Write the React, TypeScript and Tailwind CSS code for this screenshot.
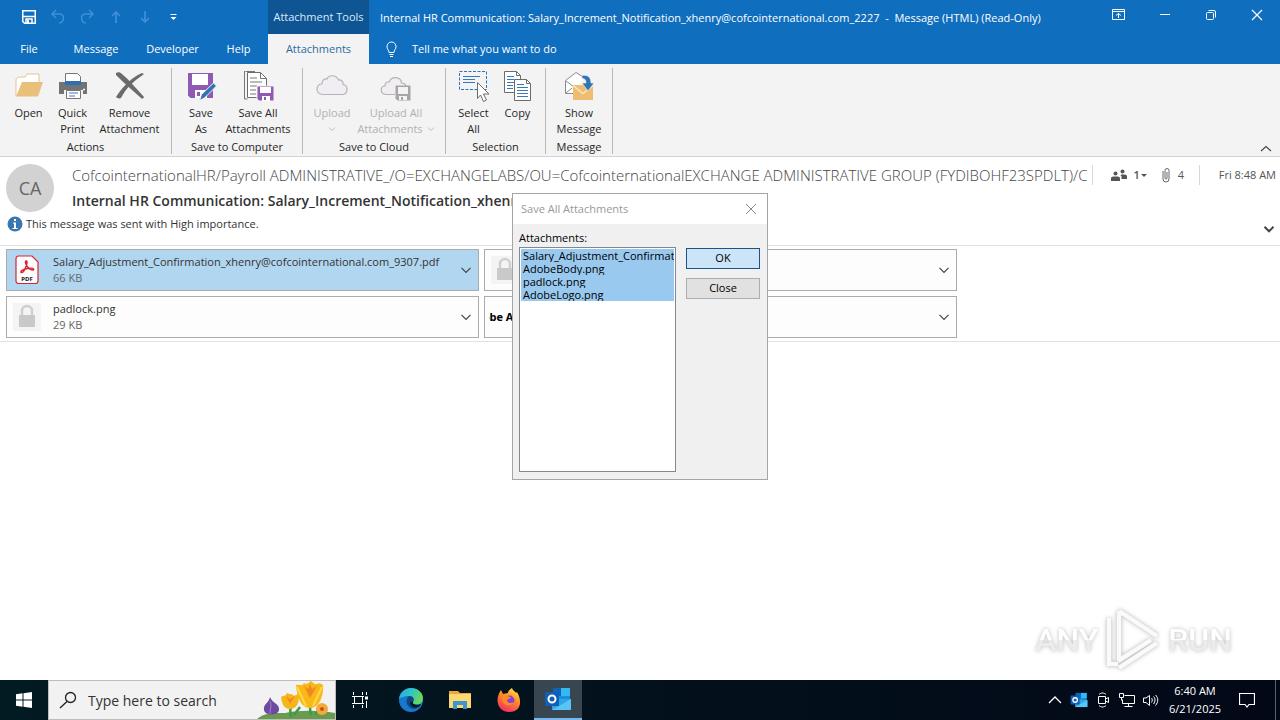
import React from "react";

type IconProps = { children: React.ReactNode; size?: string; box?: string };

function Svg({ children, size = "size-8", box = "0 0 32 32" }: IconProps) {
  return (
    <svg className={`${size} shrink-0`} viewBox={box} fill="none" aria-hidden="true">
      {children}
    </svg>
  );
}

function Chevron({ size = "size-3", width = 1.2 }: { size?: string; width?: number }) {
  return (
    <Svg size={size} box="0 0 12 12">
      <path d="M1.500 3.800 6 8.300l4.500-4.500" stroke="currentColor" strokeWidth={width} />
    </Svg>
  );
}

const OpenIcon = () => (
  <Svg>
    <path d="M3 26V9l2-2h7l2-3h12v8" fill="#fff" stroke="#e6c48f" strokeWidth="1" />
    <path d="M3 26.500 9 12h21l-5 14.500z" fill="#e9bf7c" />
  </Svg>
);

const PrintIcon = () => (
  <Svg>
    <path d="M8.500 11V3.500h12l3 3V11" fill="#fff" stroke="#767676" />
    <path d="M2 12h28v12h-4v-4H7v4H2z" fill="#737373" />
    <path d="M8 11h16v4H8z" fill="#2f6fb0" />
    <circle cx="27" cy="19.500" r="1" fill="#fff" />
    <path d="M9.500 20.500h14v8h-14z" fill="#fff" stroke="#767676" />
    <path d="M12 23h9M12 26h6" stroke="#3a78b8" />
  </Svg>
);

const RemoveIcon = () => (
  <Svg>
    <path d="M2 3c2-1 4-1 6 1 7 6 14 14 22 23-1 2-2 2-3 1C18 20 9 12 2 5z" fill="#6b6b6b" />
    <path d="M30 4C20 11 12 18 7 28c-2 1-4 0-5-1C9 16 18 7 28 3z" fill="#6b6b6b" />
  </Svg>
);

const SaveAsIcon = () => (
  <Svg>
    <path d="M3 3h25v25H5.500L3 25.500z" fill="#9059b3" />
    <path d="M7 4h16v11H7zM10 20h12v8H10z" fill="#fff" />
    <path d="M12 22h3v4h-3z" fill="#9059b3" />
    <path d="m14.500 30.500 2-6L28.500 13l3 3-12 12z" fill="#2f75b5" stroke="#f3f3f3" />
  </Svg>
);

const SaveAllIcon = () => (
  <Svg>
    <path d="M3.500 1.500H13M2.500 1v28h3" stroke="#777" />
    <path d="M5.500 2.500h13l6 6v19h-19z" fill="#fff" stroke="#6c6c6c" />
    <path d="M18.500 2.500v6h6M8 8h7M8 12h12M8 16h7M8 20h6M8 24h6" stroke="#777" />
    <path d="M15 16h17v15H17l-2-2z" fill="#9059b3" stroke="#f3f3f3" />
    <path d="M18 17h11v6H18zM20 26h8v5h-8z" fill="#fff" />
    <path d="M22 27h2v3h-2z" fill="#9059b3" />
  </Svg>
);

const CLOUD =
  "M7 24.500C3 24.500.8 22 1 19c.1-3 2-5 5-5-.3-3 1.800-5.500 5-5 1.500-4 9-5 11.500 1 3-.5 5 1.800 4.600 4.500 2.500.3 4 2.500 3.900 5-.1 3-2 5-5 5z";

const CloudIcon = () => (
  <Svg>
    <path d={CLOUD} fill="#f0eef2" stroke="#b5b2b8" strokeWidth="1.200" />
  </Svg>
);

const CloudAllIcon = () => (
  <Svg>
    <path
      d="M15 24.500H6c-3 0-5-2-4.800-4.500C1.300 17.500 3 16 5 16c0-3 1.800-4.500 4.500-4.200C11 6 21 6 21.500 13c2.500 0 4 1 4.500 3"
      fill="#f0eef2"
      stroke="#b5b2b8"
      strokeWidth="1.200"
    />
    <path d="M15.500 15.500h15v15h-13l-2-2z" fill="#a6a6a6" />
    <path d="M18 17h10v7H18zM19 26h8v4h-8z" fill="#f3f3f3" />
    <path d="M21 27h2v3h-2z" fill="#a6a6a6" />
  </Svg>
);

const SelectIcon = () => (
  <Svg>
    <path d="M1.500 1.500h27v18h-27z" stroke="#2f75b5" strokeDasharray="3 1.500" />
    <path d="M5 6.500h17M5 9.500h12M5 12.500h12" stroke="#3a78b8" />
    <path d="m19.500 12.500 11.500 11.500h-5.500l3 6-3 1.500-3-6.500-3 3.500z" fill="#fff" stroke="#6c6c6c" />
  </Svg>
);

const CopyIcon = () => (
  <Svg>
    <path d="M2.500 1.500h12l4 4v17h-16z" fill="#fff" stroke="#6c6c6c" />
    <path d="M14.500 1.500v4h4" stroke="#6c6c6c" />
    <path d="M5 6.500h7M5 9.500h7M5 12.500h7M5 15.500h6M5 18.500h6" stroke="#3a78b8" />
    <path d="M12.500 9.500h12l4 4v17h-16z" fill="#fff" stroke="#6c6c6c" />
    <path d="M24.500 9.500v4h4" stroke="#6c6c6c" />
    <path d="M15 14.500h7M15 17.500h11M15 20.500h11M15 23.500h11M15 26.500h11" stroke="#3a78b8" />
  </Svg>
);

const ShowIcon = () => (
  <Svg>
    <path d="M10 23.500H2.500v-13L13 2.500l8 5" fill="#fff" stroke="#8b8b8b" />
    <path d="m3 11 8 6M3 23l6-5" stroke="#8b8b8b" />
    <path d="M10 15h20v15H10z" fill="#efbd6f" />
    <path d="m10 15.500 10 8 10-8" stroke="#fbe6c5" strokeWidth="1.500" />
    <path d="M19 5.500c6-1 9 2 9 7.500h3l-6 8-6-8h4c0-3-1-4.500-4-4.500z" fill="#2f75b5" stroke="#f3f3f3" strokeWidth="0.600" />
  </Svg>
);

type Command = {
  icon: React.ReactNode;
  lines: string[];
  width: string;
  disabled?: boolean;
  menu?: "below" | "inline";
};

type Group = { label: string; frame: string; commands: Command[] };

const groups: Group[] = [
  {
    label: "Actions",
    frame: "w-[172px]",
    commands: [
      { icon: <OpenIcon />, lines: ["Open"], width: "w-11" },
      { icon: <PrintIcon />, lines: ["Quick", "Print"], width: "w-11" },
      { icon: <RemoveIcon />, lines: ["Remove", "Attachment"], width: "w-[70px]" },
    ],
  },
  {
    label: "Save to Computer",
    frame: "w-[131px]",
    commands: [
      { icon: <SaveAsIcon />, lines: ["Save", "As"], width: "w-[42px]" },
      { icon: <SaveAllIcon />, lines: ["Save All", "Attachments"], width: "w-[72px]" },
    ],
  },
  {
    label: "Save to Cloud",
    frame: "w-[143px]",
    commands: [
      { icon: <CloudIcon />, lines: ["Upload"], width: "w-11", disabled: true, menu: "below" },
      { icon: <CloudAllIcon />, lines: ["Upload All", "Attachments"], width: "w-[84px]", disabled: true, menu: "inline" },
    ],
  },
  {
    label: "Selection",
    frame: "w-[100px]",
    commands: [
      { icon: <SelectIcon />, lines: ["Select", "All"], width: "w-11" },
      { icon: <CopyIcon />, lines: ["Copy"], width: "w-11" },
    ],
  },
  {
    label: "Message",
    frame: "w-[67px]",
    commands: [{ icon: <ShowIcon />, lines: ["Show", "Message"], width: "w-16" }],
  },
];

function RibbonButton({ icon, lines, width, disabled, menu }: Command) {
  return (
    <button
      type="button"
      disabled={disabled}
      className={`${width} flex shrink-0 flex-col items-center whitespace-nowrap text-[11px] leading-4 disabled:text-[#b1b1b1]`}
    >
      {icon}
      <span className="mt-[3px] block">{lines[0]}</span>
      {lines[1] && (
        <span className="flex items-center justify-center gap-1">
          {lines[1]}
          {menu === "inline" && <Chevron size="size-2" />}
        </span>
      )}
      {menu === "below" && (
        <span className="flex h-4 items-center">
          <Chevron size="size-2" />
        </span>
      )}
    </button>
  );
}

function Header() {
  return (
    <header className="bg-[#106ebe] text-white">
      <div className="flex h-[34px]">
        <div className="flex w-[268px] shrink-0 items-center gap-[13px] pl-[21px] text-[#3d8fd6]">
          <button type="button" aria-label="Save">
            <Svg size="size-4" box="0 0 16 16">
              <path d="M1.750 1.750h12.500v12.500H3.500l-1.750-1.750z" stroke="#fff" strokeWidth="1.500" />
              <path d="M2 7.500h12M5 14v-4h6v4" stroke="#fff" strokeWidth="1.500" />
              <path d="M6 11h2v3H6z" fill="#fff" />
            </Svg>
          </button>
          <button type="button" aria-label="Undo" disabled>
            <Svg size="size-4" box="0 0 16 16">
              <path d="M6 1 2 5l4 4M2 5h7c6 0 6 8 0 9" stroke="currentColor" strokeWidth="1.500" />
            </Svg>
          </button>
          <button type="button" aria-label="Redo" disabled>
            <Svg size="size-4" box="0 0 16 16">
              <path d="m10 1 4 4-4 4M14 5H7c-6 0-6 8 0 9" stroke="currentColor" strokeWidth="1.500" />
            </Svg>
          </button>
          <button type="button" aria-label="Previous item" disabled>
            <Svg size="size-4" box="0 0 16 16">
              <path d="M8 14V3M4 7l4-4 4 4" stroke="currentColor" strokeWidth="1.750" />
            </Svg>
          </button>
          <button type="button" aria-label="Next item" disabled>
            <Svg size="size-4" box="0 0 16 16">
              <path d="M8 2v11M4 9l4 4 4-4" stroke="currentColor" strokeWidth="1.750" />
            </Svg>
          </button>
          <button type="button" aria-label="Customize toolbar">
            <Svg size="size-4" box="0 0 16 16">
              <path d="M4.500 5.500h6" stroke="#fff" />
              <path d="M4.500 8h6l-3 3z" fill="#fff" />
            </Svg>
          </button>
        </div>
        <div className="flex w-[101px] shrink-0 items-center justify-center whitespace-nowrap bg-[#0f5493] text-[11px] text-[#d9ebfa]">
          Attachment Tools
        </div>
        <h1 className="min-w-0 flex-1 truncate pl-[11px] text-[11px] leading-[36px]">
          Internal HR Communication: Salary_Increment_Notification_xhenry@cofcointernational.com_2227&nbsp; -&nbsp; Message (HTML) (Read-Only)
        </h1>
        <div className="flex h-[30px] shrink-0">
          <button type="button" aria-label="Ribbon display options" className="grid w-[46px] place-items-center">
            <Svg size="size-4" box="0 0 16 16">
              <path d="M1.500 2.500h12v10h-12zM1.500 4.500h12M7.500 11V6.500M5 8.500l2.500-2 2.500 2" stroke="#fff" />
            </Svg>
          </button>
          <button type="button" aria-label="Minimize" className="grid w-[46px] place-items-center">
            <Svg size="size-4" box="0 0 16 16">
              <path d="M3 7.500h10" stroke="#fff" />
            </Svg>
          </button>
          <button type="button" aria-label="Restore" className="grid w-[46px] place-items-center">
            <Svg size="size-4" box="0 0 16 16">
              <rect x="3.500" y="5.500" width="7" height="7" rx="1" stroke="#fff" />
              <path d="M5.500 3.500h5.500a1.500 1.500 0 0 1 1.500 1.500v5.500" stroke="#fff" />
            </Svg>
          </button>
          <button type="button" aria-label="Close window" className="grid w-[46px] place-items-center">
            <Svg size="size-4" box="0 0 16 16">
              <path d="m3 3 10 10M13 3 3 13" stroke="#fff" strokeWidth="1.200" />
            </Svg>
          </button>
        </div>
      </div>
      <nav className="flex h-[30px] items-center text-[11px]">
        <div className="flex w-[268px] shrink-0">
          <button type="button" className="w-[58px]">File</button>
          <button type="button" className="w-[76px]">Message</button>
          <button type="button" className="w-[77px]">Developer</button>
          <button type="button" className="w-[55px]">Help</button>
        </div>
        <button type="button" className="h-full w-[101px] shrink-0 bg-[#f3f3f3] text-[#2b6aa5]">
          Attachments
        </button>
        <button type="button" className="flex items-center gap-3 pl-[15px]">
          <Svg size="size-4" box="0 0 16 16">
            <path d="M5 11.500C5 9 3 8.500 3 5.500a4.500 4.500 0 0 1 9 0c0 3-2 3.500-2 6zM5.500 13.500h4M6 15.500h3" stroke="#fff" />
          </Svg>
          Tell me what you want to do
        </button>
      </nav>
    </header>
  );
}

function Ribbon() {
  return (
    <section aria-label="Ribbon" className="flex h-[93px] border-b border-[#d2d2d2] bg-[#f3f3f3] pt-1 text-[#262626]">
      {groups.map((group) => (
        <div key={group.label} className={`${group.frame} flex h-[86px] shrink-0 flex-col border-r border-[#b8b8b8] pt-0.5`}>
          <div className="flex h-[70px] justify-center">
            {group.commands.map((command) => (
              <RibbonButton key={command.lines.join(" ")} {...command} />
            ))}
          </div>
          <div className="whitespace-nowrap text-center text-[11px] leading-[19px]">{group.label}</div>
        </div>
      ))}
      <button type="button" aria-label="Collapse ribbon" className="ml-auto mr-2 self-end pb-px text-[#444]">
        <Svg size="size-3" box="0 0 12 12">
          <path d="m1 8 5-4.500L11 8" stroke="currentColor" strokeWidth="1.100" />
        </Svg>
      </button>
    </section>
  );
}

const PdfThumb = () => (
  <Svg size="h-8 w-7" box="0 0 28 32">
    <path d="M5 2h14l6 6v19a2.500 2.500 0 0 1-2.500 2.500h-17A2.500 2.500 0 0 1 3 27V4.500A2.500 2.500 0 0 1 5 2z" fill="#fff" stroke="#dc2430" strokeWidth="1.200" />
    <path d="M13.500 7c-2.500 0 0 5 2 7 2.500 2.500 6 2.500 5 1-1-2-11 0-12.500 2.500-.5 1.500 2 1.500 3.500-1.500s3.500-9 2-9z" stroke="#dc2430" strokeWidth="1.500" />
    <text x="14" y="27" textAnchor="middle" fontSize="6" fontWeight="700" fill="#111">PDF</text>
  </Svg>
);

const LockThumb = () => (
  <Svg size="h-8 w-7" box="0 0 28 32">
    <path d="M0 2h28v28H0z" fill="#f4f4f4" />
    <path d="M9 15v-5a5 5 0 0 1 10 0v5" stroke="#cfcfcf" strokeWidth="2.500" />
    <rect x="6" y="14" width="16" height="12" rx="1" fill="#c9c9c9" />
  </Svg>
);

const LogoThumb = () => (
  <span className="flex w-7 justify-center overflow-hidden whitespace-nowrap text-[11px] font-bold text-black">
    Adobe Acrob
  </span>
);

type Attachment = { name: string; size?: string; thumb: React.ReactNode; selected?: boolean };

const attachments: Attachment[] = [
  { name: "Salary_Adjustment_Confirmation_xhenry@cofcointernational.com_9307.pdf", size: "66 KB", thumb: <PdfThumb />, selected: true },
  { name: "AdobeBody.png", thumb: <LockThumb /> },
  { name: "padlock.png", size: "29 KB", thumb: <LockThumb /> },
  { name: "AdobeLogo.png", thumb: <LogoThumb /> },
];

function AttachmentCard({ name, size, thumb, selected }: Attachment) {
  return (
    <li
      className={`flex h-[42px] items-center border border-[#ababab] pr-1.5 ${selected ? "bg-[#b1d6f0]" : "bg-[#fdfdfd]"} ${
        name === "AdobeLogo.png" ? "pl-1" : "pl-1.5"
      }`}
    >
      {thumb}
      <div className="ml-3 min-w-0 flex-1 text-[11px] leading-4">
        {size && (
          <>
            <div className="truncate text-[#333]">{name}</div>
            <div className="text-[#666]">{size}</div>
          </>
        )}
      </div>
      <button type="button" aria-label={`Options for ${name}`} className="text-[#444]">
        <Chevron />
      </button>
    </li>
  );
}

function MessageHeader() {
  return (
    <section aria-label="Message header" className="pt-1">
      <div className="flex items-start pl-1.5">
        <div className="mt-[3px] grid size-12 shrink-0 place-items-center rounded-full bg-[#d2d2d2] text-[18px] text-[#666]">
          CA
        </div>
        <div className="ml-[18px] min-w-0 flex-1">
          <div className="flex h-7 items-center">
            <div className="min-w-0 flex-1 overflow-hidden whitespace-nowrap text-[15px] font-light leading-6 text-[#444]">
              CofcointernationalHR/Payroll ADMINISTRATIVE_/O=EXCHANGELABS/OU=CofcointernationalEXCHANGE ADMINISTRATIVE GROUP (FYDIBOHF23SPDLT)/CN
            </div>
            <div className="ml-1 flex h-5 shrink-0 items-center border-l border-[#d8d8d8] pl-[18px] text-[11px] text-[#555]">
              <Svg size="size-4" box="0 0 16 16">
                <circle cx="4.500" cy="6.500" r="2" fill="#555" />
                <circle cx="11.500" cy="4.500" r="2" fill="#555" />
                <path d="M0 14v-2.500C0 9.500 2 9.500 4.500 9.500s4.500 0 4.500 2V14zM10.500 12H16V9.500c0-2-2-2-4.500-2-1 0-1.500.3-2 1 1.500.5 1 1.500 1 3.500z" fill="#555" />
              </Svg>
              <span className="ml-1.5 font-semibold">1</span>
              <Svg size="size-2" box="0 0 8 8">
                <path d="M1 3h6L4 6z" fill="#555" />
              </Svg>
              <Svg size="ml-3 h-4 w-3" box="0 0 12 16">
                <path d="M3 4v8a3 3 0 0 0 6 0V3.500a2 2 0 0 0-4 0V11a1 1 0 0 0 2 0V5" stroke="#666" />
              </Svg>
              <span className="ml-1.5">4</span>
            </div>
            <time className="ml-[15px] flex h-5 w-[81px] shrink-0 items-center justify-end whitespace-nowrap border-l border-[#d8d8d8] pr-1 text-[11px] text-[#555]">
              Fri 8:48 AM
            </time>
          </div>
          <h2 className="overflow-hidden whitespace-nowrap text-[14px] font-semibold leading-6 text-[#333]">
            Internal HR Communication: Salary_Increment_Notification_xhenry@cofcointernational.com_2227
          </h2>
        </div>
      </div>
      <div className="flex h-[33px] items-start border-b border-[#e1e1e1] pl-[7px] pr-[5px] text-[11px] text-[#333]">
        <div className="flex h-[22px] flex-1 items-center gap-[3px]">
          <Svg size="size-4" box="0 0 16 16">
            <circle cx="8" cy="8" r="7.500" fill="#3a76af" />
            <path d="M7 3h2v2H7zM6 6.500h3V12h1.500v1h-5v-1H7V7.500H6z" fill="#fff" />
          </Svg>
          <p>This message was sent with High importance.</p>
        </div>
        <button type="button" aria-label="Expand header" className="self-center text-[#444]">
          <Chevron width={2} />
        </button>
      </div>
      <ul className="grid grid-cols-2 gap-[5px] border-b border-[#e1e1e1] py-[3px] pl-1.5 pr-[323px]">
        {attachments.map((item) => (
          <AttachmentCard key={item.name} {...item} />
        ))}
      </ul>
    </section>
  );
}

const files = ["Salary_Adjustment_Confirmati", "AdobeBody.png", "padlock.png", "AdobeLogo.png"];

function SaveDialog() {
  return (
    <div
      role="dialog"
      aria-labelledby="dialog-title"
      className="absolute left-1/2 top-[193px] w-[256px] -translate-x-1/2 border border-[#a5a5a5] bg-[#f0f0f0] text-[11px] text-black"
    >
      <div className="flex h-[30px] items-center justify-between bg-white pl-2 pr-[10px]">
        <h2 id="dialog-title" className="text-[11px] text-[#999]">Save All Attachments</h2>
        <button type="button" aria-label="Close dialog">
          <Svg size="size-3" box="0 0 12 12">
            <path d="m1 1 10 10M11 1 1 11" stroke="#888" />
          </Svg>
        </button>
      </div>
      <div className="flex gap-2.5 pb-[7px] pl-1.5 pr-[7px] pt-1.5">
        <div className="w-[157px]">
          <div id="files-label" className="leading-4">Attachments:</div>
          <ul
            role="listbox"
            aria-multiselectable="true"
            aria-labelledby="files-label"
            className="mt-px h-[225px] border border-[#828790] bg-white p-px leading-[13px]"
          >
            {files.map((file) => (
              <li key={file} role="option" aria-selected="true" className="overflow-hidden whitespace-nowrap bg-[#99c9ef] pl-0.5">
                {file}
              </li>
            ))}
          </ul>
        </div>
        <div className="flex flex-1 flex-col gap-[9px] pt-[18px]">
          <button type="button" className="h-[21px] border border-[#1c5285] bg-[#cce4f7]">OK</button>
          <button type="button" className="h-[21px] border border-[#adadad] bg-[#e1e1e1]">Close</button>
        </div>
      </div>
    </div>
  );
}

function Watermark() {
  return (
    <div className="flex items-center gap-1.5 text-[32px] font-medium leading-none drop-shadow-[0_0_2px_#bbb] [font-family:Roboto,sans-serif]">
      <span className="bg-linear-to-b from-white from-50% to-[#ececec] to-50% bg-clip-text text-transparent">ANY</span>
      <Svg size="h-16 w-[58px]" box="0 0 58 64">
        <path d="M15 3v50M15 3l38 25M5 10v46h9M15 60l38-25M14 53l33-21" stroke="#e2e2e2" strokeWidth="5" />
        <path d="M15 3v50M15 3l38 25M5 10v46h9M15 60l38-25M14 53l33-21" stroke="#fafafa" strokeWidth="4" />
      </Svg>
      <span className="bg-linear-to-b from-white from-50% to-[#ececec] to-50% bg-clip-text text-transparent">RUN</span>
    </div>
  );
}

const OutlookIcon = ({ size }: { size: string }) => (
  <Svg size={size} box="0 0 28 28">
    <path d="M9 3h17v17H9z" fill="#1490df" />
    <path d="M17 3h9v8h-9z" fill="#35b8f1" />
    <path d="M9 3h8v8H9z" fill="#0c64b8" />
    <path d="M8 14h19v11H8z" fill="#2fa4e7" />
    <path d="m27 14-19 11h19z" fill="#58c5f5" />
    <path d="M1 7h14v14H1z" fill="#0f5fb5" />
    <circle cx="8" cy="14" r="3.500" stroke="#fff" strokeWidth="2" />
  </Svg>
);

function Taskbar() {
  return (
    <footer className="flex h-10 items-stretch bg-linear-to-r from-[#021a22] to-[#030817] text-white">
      <button type="button" aria-label="Start" className="grid w-12 shrink-0 place-items-center">
        <Svg size="size-4" box="0 0 16 16">
          <path d="m0 2.200 6.500-.9v6.200H0zM7.500 1.200 16 0v7.500H7.500zM0 8.500h6.500v6.200L0 13.800zM7.500 8.500H16V16l-8.500-1.200z" fill="#fff" />
        </Svg>
      </button>
      <label className="flex w-72 shrink-0 items-center border border-[#bdbdbd] bg-[#f2f2f2] pl-2.5">
        <Svg size="size-[18px]" box="0 0 18 18">
          <circle cx="11.500" cy="6.500" r="5" stroke="#222" strokeWidth="1.300" />
          <path d="M8 10.500 1 17" stroke="#222" strokeWidth="1.300" />
        </Svg>
        <input
          aria-label="Search"
          placeholder="Type here to search"
          className="ml-[11px] w-0 min-w-0 flex-1 bg-transparent text-[14px] outline-none placeholder:text-[#333]"
        />
        <Svg size="h-[38px] w-20" box="0 0 80 38">
          <path d="M2 38c8-7 18-6 28-6 14-3 34-3 50 0v6z" fill="#6a9a4f" />
          <path d="M36 36c-1-5-1-8 0-12M56 34c-2-8-1-12 1-16M39 34l6-8M60 33l7-7" stroke="#3f9a45" strokeWidth="2.500" />
          <path d="M15 16c-1 6-7 7-6 13 1 6 14 6 15 0s-7-7-9-13z" fill="#6d4aa0" />
          <path d="M15 20c2 5 0 8 0 13" stroke="#a383ce" />
          <path d="M26 16c3-2 4 0 6-4 3 2 5 0 7 3 2-1 4-2 5 0 0 8-3 13-9 13s-8-5-9-12z" fill="#f7b51c" />
          <path d="m31 15 4 8 5-8-5 3z" fill="#f08a1e" />
          <path d="M41 4c4-1 6 2 8-2 3 2 4 0 7-2 3 2 4 4 6 3 2-2 5 0 6 1 1 11-4 23-13 23S42 16 41 4z" fill="#f9b718" />
          <path d="m42 6 9 19M67 6l-9 19" stroke="#ffd94a" strokeWidth="2" />
          <path d="m49 5 6 12 7-12-5 3-2-5-2 5z" fill="#f08a1e" />
          <circle cx="67" cy="28" r="6" fill="#f6a93b" />
          <circle cx="67" cy="28" r="2" fill="#bd5615" />
        </Svg>
      </label>
      <button type="button" aria-label="Task view" className="grid w-12 shrink-0 place-items-center">
        <Svg size="size-[18px]" box="0 0 18 18">
          <path d="M2.500 1v3M11.500 1v3M2.500 17v-3M11.500 17v-3M1 5.500h12M1 12.500h12M3.500 5.500v7M11.500 5.500v7M15.500 1v3M15.500 10v7" stroke="#fff" />
          <path d="M14 5.500h3v3h-3z" fill="#fff" />
        </Svg>
      </button>
      <button type="button" aria-label="Microsoft Edge" className="ml-0.5 grid w-[50px] shrink-0 place-items-center">
        <Svg size="size-6" box="0 0 24 24">
          <defs>
            <linearGradient id="edge-top" x1="0" y1="0" x2="1" y2="0.400">
              <stop offset="0" stopColor="#2aa5e1" />
              <stop offset="0.500" stopColor="#2ec4c9" />
              <stop offset="1" stopColor="#66d95a" />
            </linearGradient>
          </defs>
          <circle cx="12" cy="12" r="12" fill="#1679cf" />
          <path d="M0 11C1 4 6 0 12 0c7 0 12 5 12 10s-4 7-8 7-3-2-2-3c2-3 0-6-4-6-5 0-9 2-10 3z" fill="url(#edge-top)" />
          <path d="M10 8c4 0 6 3 4 6-1 2 3 4 8 2-2 3-5 5-8 5-6-1-9-9-4-13z" fill="#10477f" />
          <path d="M14 14c-1 2 3 4 8 2l-1 2c-4 3-9 1-10-2 0-2 1-3 3-2z" fill="#041a24" />
        </Svg>
      </button>
      <button type="button" aria-label="File Explorer" className="grid w-12 shrink-0 place-items-center">
        <Svg size="h-[22px] w-6" box="0 0 24 22">
          <path d="M1 2h9l2 2h11v15H1z" fill="#e9a93b" />
          <path d="M1 5h22v14H1z" fill="#fbd970" />
          <path d="M5 20v-8h14v8h-4v-4H9v4z" fill="#3b95d2" />
        </Svg>
      </button>
      <button type="button" aria-label="Firefox" className="grid w-[50px] shrink-0 place-items-center">
        <Svg size="size-6" box="0 0 24 24">
          <defs>
            <linearGradient id="fox" x1="0.800" y1="0" x2="0.300" y2="1">
              <stop offset="0" stopColor="#ffe53f" />
              <stop offset="0.450" stopColor="#ff8a24" />
              <stop offset="1" stopColor="#f42b68" />
            </linearGradient>
          </defs>
          <path d="m4 2 2 4 5-1c0-2 2-4 4-5 1 3 3 3 4 5l1-1c5 8 5 20-8 20C1 24-3 12 4 2z" fill="url(#fox)" />
          <circle cx="12.500" cy="12.500" r="5" fill="#8b3fd8" />
          <path d="M5 9c4-2 6 0 9 0-1 2-3 2-4 3 0 3 4 4 7 2-1 5-12 6-12-5z" fill="#ff8a24" />
        </Svg>
      </button>
      <button type="button" aria-label="Outlook" className="grid w-12 shrink-0 place-items-center border-b-2 border-[#76b9ed] bg-[#374650]">
        <OutlookIcon size="size-7" />
      </button>
      <div className="ml-auto flex shrink-0 items-center">
        <button type="button" aria-label="Show hidden icons" className="grid w-6 place-items-center">
          <Svg size="size-3.5" box="0 0 14 14">
            <path d="m1 10 6-6 6 6" stroke="#fff" strokeWidth="1.300" />
          </Svg>
        </button>
        <button type="button" aria-label="Outlook notifications" className="grid w-6 place-items-center">
          <OutlookIcon size="size-[18px]" />
        </button>
        <button type="button" aria-label="Meet now" className="grid w-6 place-items-center">
          <Svg size="size-4" box="0 0 16 16">
            <path d="M3.500 4.500h7v7h-7zM10.500 7l3-1.500v5l-3-1.500M4 2.500c2-2 5-2 7 0M4 13.500c2 2 5 2 7 0" stroke="#fff" />
          </Svg>
        </button>
        <button type="button" aria-label="Network" className="grid w-6 place-items-center">
          <Svg size="size-4" box="0 0 16 16">
            <path d="M5.500 3.500h10v8h-12v-4M9.500 11.500v3M5.500 14.500h8M.5 1.500h4v4h-4zM2.500 5.500v3" stroke="#fff" />
          </Svg>
        </button>
        <button type="button" aria-label="Volume" className="grid w-6 place-items-center">
          <Svg size="size-4" box="0 0 16 16">
            <path d="M.5 6v4.500H3l3.500 3v-10L3 6zM8.500 6c1 1 1 3 0 4.500M10.500 4.500c2 2 2 5 0 7.500M12.500 3c3 3 3 7 0 10.500" stroke="#fff" />
          </Svg>
        </button>
        <div className="w-16 whitespace-nowrap text-center text-[11px] leading-[18px]">
          <div>6:40 AM</div>
          <div>6/21/2025</div>
        </div>
        <button type="button" aria-label="Notifications" className="grid w-10 place-items-center">
          <Svg size="size-4" box="0 0 16 16">
            <path d="M.5 1.500h15v11H10L8 15l-2-2.500H.5z" stroke="#fff" strokeWidth="1.200" />
          </Svg>
        </button>
        <div className="ml-2 h-10 w-[5px] border-l border-[#59606b]" />
      </div>
    </footer>
  );
}

export default function App() {
  return (
    <div className="relative flex min-h-screen flex-col bg-white [font-family:'Open_Sans','Noto_Sans',sans-serif]">
      <Header />
      <Ribbon />
      <MessageHeader />
      <main className="flex flex-1 items-end justify-end pb-2 pr-12">
        <Watermark />
      </main>
      <Taskbar />
      <SaveDialog />
    </div>
  );
}
